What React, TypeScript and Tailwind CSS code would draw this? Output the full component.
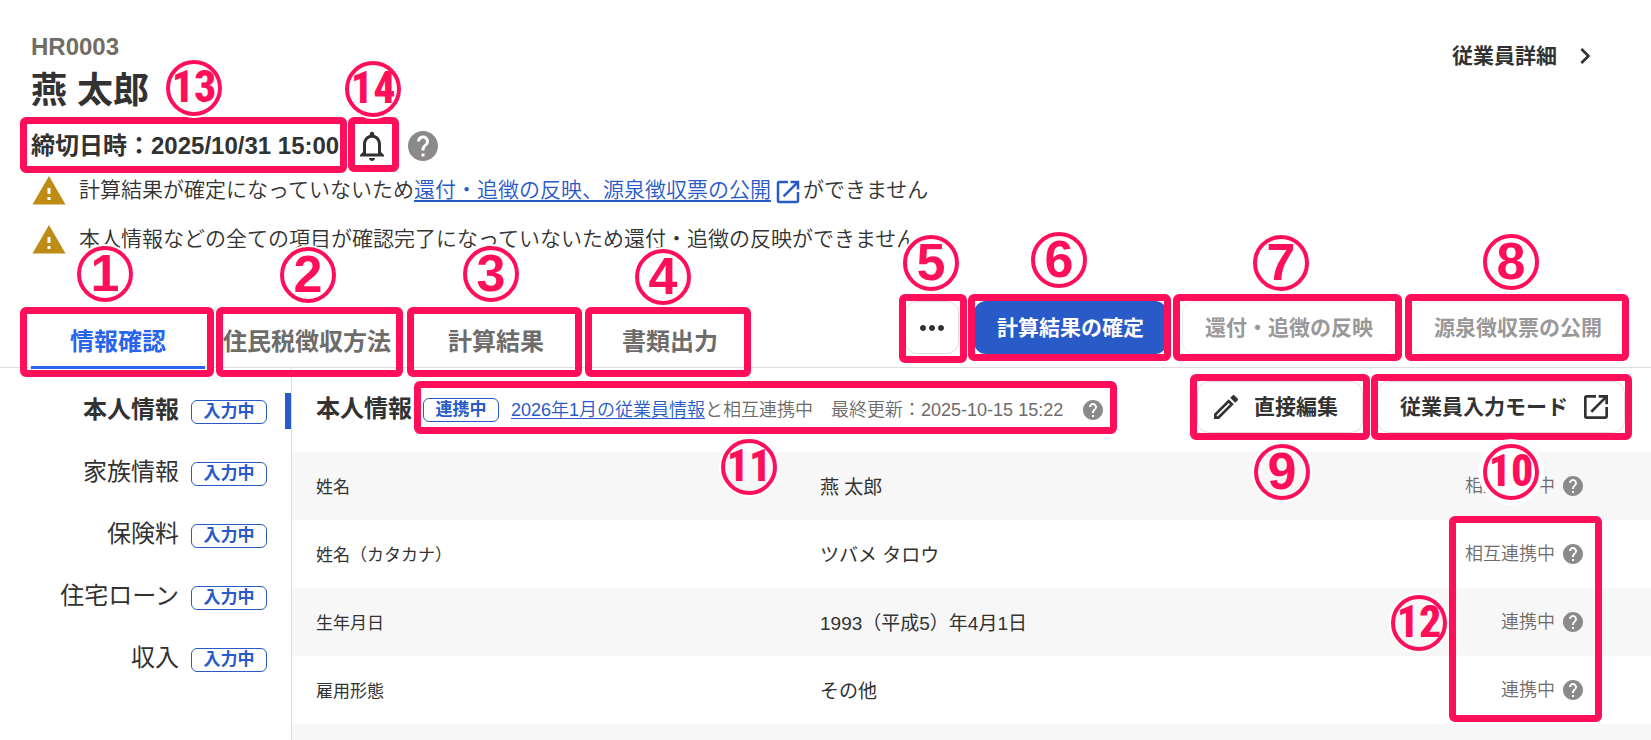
import type { ReactNode } from 'react'
import {
  MdChevronRight,
  MdHelp,
  MdMoreHoriz,
  MdNotificationsNone,
  MdOpenInNew,
  MdOutlineEdit,
  MdWarning,
} from 'react-icons/md'

const tabs = [
  {
    label: '情報確認',
    active: true,
    no: 1,
    frame: '-left-[11px] -right-[9px] -top-[11px] -bottom-2',
    pin: 'left-[46px] -top-[72px]',
  },
  {
    label: '住民税徴収方法',
    no: 2,
    frame: 'left-[11px] right-[6px] -top-[11px] -bottom-2',
    pin: 'left-[75px] -top-[71px]',
  },
  {
    label: '計算結果',
    no: 3,
    frame: '-left-[2px] right-px -top-[11px] -bottom-2',
    pin: 'left-[54px] -top-[72px]',
  },
  {
    label: '書類出力',
    no: 4,
    frame: 'left-[2px] right-[6px] -top-[11px] -bottom-2',
    pin: 'left-[52px] -top-[69px]',
  },
]

const steps = ['本人情報', '家族情報', '保険料', '住宅ローン', '収入']

const rows = [
  { label: '姓名', value: '燕 太郎', status: '相互連携中' },
  { label: '姓名（カタカナ）', value: 'ツバメ タロウ', status: '相互連携中' },
  { label: '生年月日', value: '1993（平成5）年4月1日', status: '連携中' },
  { label: '雇用形態', value: 'その他', status: '連携中' },
]

function Frame({ className }: { className: string }) {
  return (
    <span
      className={`pointer-events-none absolute z-10 rounded-md border-7 border-[#ff0f5a] ${className}`}
    />
  )
}

function Pin({ no, className }: { no: number; className: string }) {
  return (
    <span
      className={`pointer-events-none absolute z-20 flex size-14 items-center justify-center rounded-full border-4 border-[#ff0f5a] pb-0.5 leading-none text-[#ff0f5a] ${
        no > 9
          ? "font-['Roboto_Condensed','Liberation_Sans_Narrow','Liberation_Sans',sans-serif] text-[44px] font-extrabold"
          : "font-['Liberation_Sans',sans-serif] text-[52px] font-bold"
      } ${no === 10 ? 'bg-white shadow-[0_0_0_5px_#fff]' : 'shadow-[0_0_0_2px_#fff]'} ${className}`}
    >
      {no}
    </span>
  )
}

function Badge({ children }: { children: ReactNode }) {
  return (
    <span className="flex h-6 w-[76px] shrink-0 items-center justify-center rounded-md border border-[#285ac8] bg-white pb-0.5 text-[17px] font-bold leading-none text-[#285ac8]">
      {children}
    </span>
  )
}

function Help({ className }: { className: string }) {
  return (
    <button type="button" aria-label="ヘルプ" className="shrink-0 text-[#8c8989]">
      <MdHelp className={className} />
    </button>
  )
}

function Header() {
  return (
    <header className="pt-[33px] pl-[31px]">
      <div className="flex items-start justify-between">
        <div>
          <p className="text-2xl leading-7 font-bold text-[#706d65]">HR0003</p>
          <div className="relative mt-2">
            <h1 className="text-4xl leading-11 font-bold">燕 太郎</h1>
          </div>
        </div>
        <a href="#detail" className="mt-[7px] mr-[50px] flex items-center gap-3 text-[21px] leading-8 font-bold">
          従業員詳細
          <MdChevronRight className="size-8" />
        </a>
      </div>
      <div className="mt-[15px] flex h-9 items-center">
        <p className="relative text-2xl leading-9 font-bold whitespace-nowrap">
          締切日時：2025/10/31 15:00
          <Frame className="-top-[11px] -right-2 -bottom-[9px] -left-[11px]" />
          <Pin no={13} className="-top-[68px] left-[135px]" />
        </p>
        <div className="relative ml-[15px] flex">
          <button type="button" aria-label="通知">
            <MdNotificationsNone className="size-9" />
          </button>
          <Frame className="-top-[11px] -right-[9px] -bottom-2 -left-[6px]" />
          <Pin no={14} className="-top-[67px] -left-[9px]" />
        </div>
        <div className="ml-[15px] flex">
          <Help className="size-9" />
        </div>
      </div>
      <div className="mt-[9px] flex flex-col gap-[13px] text-[21px] font-[350]">
        <div className="flex h-9 items-center gap-3">
          <MdWarning className="size-9 text-[#be8c14]" />
          <p className="flex items-center pb-0.5 leading-8">
            計算結果が確定になっていないため
            <a
              href="#reflect"
              className="flex items-center gap-0.5 text-[#285ac8] underline decoration-2 underline-offset-3"
            >
              還付・追徴の反映、源泉徴収票の公開
              <MdOpenInNew className="mt-1 size-[30px]" />
            </a>
            ができません
          </p>
        </div>
        <div className="flex h-9 items-center gap-3">
          <MdWarning className="size-9 text-[#be8c14]" />
          <p className="pb-0.5 leading-8">
            本人情報などの全ての項目が確認完了になっていないため還付・追徴の反映ができません
          </p>
        </div>
      </div>
    </header>
  )
}

function Toolbar() {
  return (
    <div className="mt-[43px] flex items-end justify-between border-b border-[#dddddd] pl-[31px]">
      <nav className="flex">
        {tabs.map((tab) => (
          <div key={tab.label} className="relative -mb-0.5">
            <button
              type="button"
              className={`h-[51px] min-w-[174px] border-b-3 px-[18px] text-2xl font-bold whitespace-nowrap ${
                tab.active
                  ? 'border-[#2864f0] text-[#2864f0]'
                  : 'border-transparent text-[#6e6b6b]'
              }`}
            >
              {tab.label}
            </button>
            <Frame className={tab.frame} />
            <Pin no={tab.no} className={tab.pin} />
          </div>
        ))}
      </nav>
      <div className="mr-[26px] mb-[13px] flex gap-[15px] text-[21px] font-bold">
        <div className="relative">
          <button
            type="button"
            aria-label="その他の操作"
            className="flex h-[53px] w-[54px] items-center justify-center rounded-xl border border-[#dddddd] bg-white"
          >
            <MdMoreHoriz className="size-9" />
          </button>
          <Frame className="-top-[7px] -right-2 -bottom-[9px] -left-[6px]" />
          <Pin no={5} className="-top-[66px] -left-[2px]" />
        </div>
        <div className="relative">
          <button
            type="button"
            className="h-[53px] rounded-xl bg-[#285ac8] px-[23px] whitespace-nowrap text-white"
          >
            計算結果の確定
          </button>
          <Frame className="-top-[7px] -right-1 -bottom-[7px] -left-[6px]" />
          <Pin no={6} className="-top-[69px] left-[57px]" />
        </div>
        <div className="relative">
          <button
            type="button"
            disabled
            className="h-[53px] rounded-xl border border-[#eeeeee] bg-white px-[22px] whitespace-nowrap text-[#9a9898]"
          >
            還付・追徴の反映
          </button>
          <Frame className="-top-[7px] -right-[6px] -bottom-[7px] -left-[9px]" />
          <Pin no={7} className="-top-[66px] left-[71px]" />
        </div>
        <div className="relative">
          <button
            type="button"
            disabled
            className="h-[53px] rounded-xl border border-[#eeeeee] bg-white px-[22px] whitespace-nowrap text-[#9a9898]"
          >
            源泉徴収票の公開
          </button>
          <Frame className="-top-[7px] -right-1 -bottom-[7px] -left-[6px]" />
          <Pin no={8} className="-top-[67px] left-[72px]" />
        </div>
      </div>
    </div>
  )
}

function Sidebar() {
  return (
    <aside className="w-[292px] shrink-0 border-r border-[#dddddd] pt-[25px]">
      <ul className="flex flex-col gap-[26px]">
        {steps.map((step, i) => (
          <li
            key={step}
            className={`flex h-9 items-center justify-end gap-3 border-r-6 pr-[18px] ${
              i === 0 ? 'border-[#285ac8] font-bold' : 'border-transparent'
            }`}
          >
            <a href={`#step-${i + 1}`} className="pb-0.5 text-2xl leading-9">
              {step}
            </a>
            <div className="pt-0.5">
              <Badge>入力中</Badge>
            </div>
          </li>
        ))}
      </ul>
    </aside>
  )
}

function Detail() {
  return (
    <main className="min-w-0 flex-1">
      <div className="flex h-21 items-center justify-between pr-[26px] pl-6">
        <div className="flex items-center">
          <h2 className="pb-0.5 text-2xl leading-9 font-bold whitespace-nowrap">本人情報</h2>
          <div className="relative ml-[11px] flex items-center">
            <Badge>連携中</Badge>
            <p className="ml-3 text-lg leading-7 font-[350] whitespace-nowrap text-[#6e6b6b]">
              <a href="#employee" className="text-[#285ac8] underline underline-offset-2">
                2026年1月の従業員情報
              </a>
              と相互連携中　最終更新：2025-10-15 15:22
            </p>
            <div className="ml-[18px] flex">
              <Help className="size-6" />
            </div>
            <Frame className="-top-[15px] -right-3 -bottom-[10px] -left-[9px]" />
            <Pin no={11} className="top-[43px] left-[298px]" />
          </div>
        </div>
        <div className="mb-1.5 flex gap-3.5 text-[21px] font-bold">
          <div className="relative">
            <button
              type="button"
              className="flex h-[52px] items-center gap-3 rounded-xl border border-[#dddddd] bg-white pr-6 pl-3 whitespace-nowrap"
            >
              <MdOutlineEdit className="size-8" />
              直接編集
            </button>
            <Frame className="-top-[7px] -right-[7px] -bottom-[7px] -left-[7px]" />
            <Pin no={9} className="top-[63px] left-[57px]" />
          </div>
          <div className="relative">
            <button
              type="button"
              className="flex h-[52px] items-center gap-3 rounded-xl border border-[#dddddd] bg-white pr-3 pl-[22px] whitespace-nowrap"
            >
              従業員入力モード
              <MdOpenInNew className="size-8" />
            </button>
            <Frame className="-top-[7px] -right-[7px] -bottom-[7px] -left-[6px]" />
            <Pin no={10} className="top-[63px] left-[106px]" />
          </div>
        </div>
      </div>
      <div className="relative">
        <table className="w-full table-fixed border-collapse text-left">
          <tbody>
            {rows.map((row) => (
              <tr key={row.label} className="h-17 odd:bg-[#f7f7f7]">
                <th scope="row" className="w-[528px] pt-1 pl-6 text-[17px] font-normal">
                  {row.label}
                </th>
                <td className="pt-1 text-[19px]">{row.value}</td>
                <td className="w-[240px] pr-[66px]">
                  <div className="flex items-center justify-end gap-1.5 text-lg font-[350] text-[#6e6b6b]">
                    {row.status}
                    <Help className="size-6" />
                  </div>
                </td>
              </tr>
            ))}
            <tr className="h-4 bg-[#f7f7f7]">
              <td colSpan={3} />
            </tr>
          </tbody>
        </table>
        <Frame className="top-16 right-[49px] bottom-[18px] w-[153px]" />
        <Pin no={12} className="top-[143px] right-[204px]" />
      </div>
    </main>
  )
}

export default function App() {
  return (
    <div className="min-h-screen overflow-x-hidden bg-white font-['Liberation_Sans','Noto_Sans_CJK_JP',sans-serif] text-[#323232]">
      <Header />
      <Toolbar />
      <div className="flex">
        <Sidebar />
        <Detail />
      </div>
    </div>
  )
}
